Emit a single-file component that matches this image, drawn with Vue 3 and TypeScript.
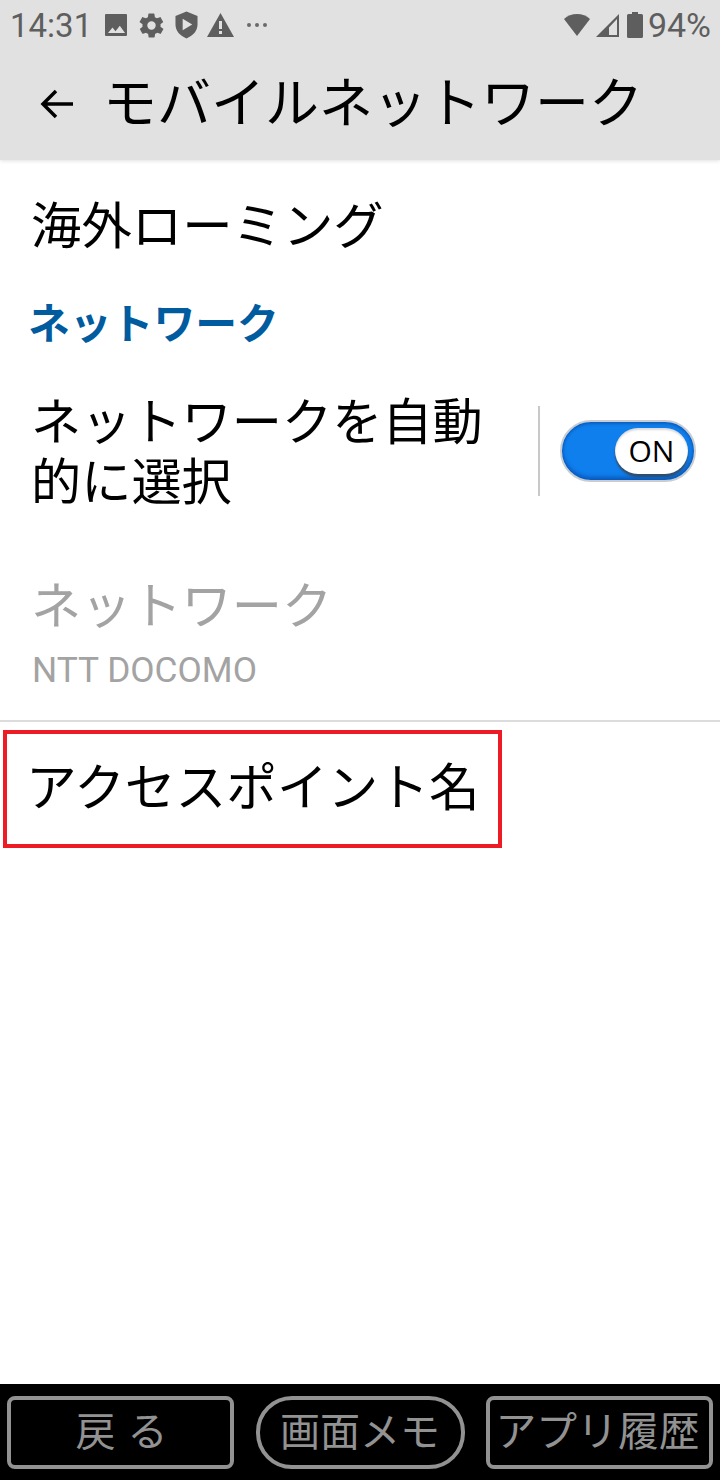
<template>
  <div class="screen">
    <header class="header">
      <div class="status-bar">
        <span class="clock">14:31</span>
        <div class="status-icons">
          <svg class="ic" width="24" height="24" viewBox="0 0 24 24"><path d="M2 1h20a1 1 0 0 1 1 1v20a1 1 0 0 1-1 1H2a1 1 0 0 1-1-1V2a1 1 0 0 1 1-1zM4 20h17l-5.200-7.200-4.300 5.400-3-3.600z" fill-rule="evenodd" /></svg>
          <svg class="ic" width="29" height="29" viewBox="0 0 24 24"><path d="M19.400 13c.1-.3.1-.7.1-1s0-.7-.1-1l2.100-1.600c.2-.2.2-.4.1-.6l-2-3.500c-.1-.2-.4-.3-.6-.2l-2.500 1c-.5-.4-1.100-.7-1.700-1l-.4-2.600c0-.3-.2-.5-.5-.5h-4c-.3 0-.5.2-.5.4l-.4 2.700c-.6.2-1.100.6-1.700 1l-2.500-1c-.2-.1-.5 0-.6.2l-2 3.500c-.1.2-.1.5.1.6L4.600 11c0 .3-.1.7-.1 1s0 .7.1 1l-2.100 1.600c-.2.2-.2.4-.1.6l2 3.500c.1.2.4.3.6.2l2.500-1c.5.4 1.100.7 1.700 1l.4 2.600c0 .3.2.5.5.5h4c.3 0 .5-.2.5-.4l.4-2.700c.6-.2 1.100-.6 1.700-1l2.500 1c.2.1.5 0 .6-.2l2-3.500c.1-.2.1-.5-.1-.6zM12 15.500a3.500 3.500 0 1 1 0-7 3.500 3.500 0 0 1 0 7z" fill-rule="evenodd" /></svg>
          <svg class="ic" width="23" height="28" viewBox="0 0 24 28"><path d="M12 0l11.500 4.500v9c0 6.500-4.800 12-11.500 14.500C5.300 25.500.5 20 .5 13.500v-9zM8 7.500v12l10-6z" fill-rule="evenodd" /></svg>
          <svg class="ic" width="27" height="24" viewBox="0 0 27 24"><path d="M13.500 0L27 24H0zM12 8v8h3V8zM12 18v3h3v-3z" fill-rule="evenodd" /></svg>
          <span class="more">
            <i></i><i></i><i></i>
          </span>
        </div>
        <div class="status-right">
          <svg class="ic" width="26" height="22" viewBox="0 0 26 22"><path d="M13 0c5 0 9.500 1.800 13 5L13 22 0 5c3.500-3.200 8-5 13-5z" /></svg>
          <svg class="ic signal" width="23" height="23" viewBox="0 0 23 23"><path d="M23 0v23H0zM21 5L13 13.500V21h8z" fill-rule="evenodd" /></svg>
          <svg class="ic" width="16" height="26" viewBox="0 0 16 26"><path d="M5 0h6v2h3.500a1.500 1.500 0 0 1 1.500 1.500v21a1.500 1.500 0 0 1-1.500 1.500h-13A1.500 1.500 0 0 1 0 24.500v-21A1.500 1.500 0 0 1 1.500 2H5z" /></svg>
          <span class="battery">94%</span>
        </div>
      </div>
      <div class="toolbar">
        <svg class="back" width="34" height="34" viewBox="0 0 34 34" fill="none" stroke="#000" stroke-width="3.500"><path d="M33 17H3M16 4L3 17l13 13" /></svg>
        <h1 class="title">モバイルネットワーク</h1>
      </div>
    </header>

    <main class="content">
      <div class="row roaming">海外ローミング</div>
      <h2 class="category">ネットワーク</h2>

      <div class="auto-row">
        <div class="auto-label">ネットワークを自動的に選択</div>
        <div class="divider"></div>
        <div class="toggle">
          <span class="knob">ON</span>
        </div>
      </div>

      <div class="disabled-row">
        <div class="disabled-title">ネットワーク</div>
        <div class="disabled-sub">NTT DOCOMO</div>
      </div>

      <div class="apn-wrap">
        <div class="apn-box">アクセスポイント名</div>
      </div>
    </main>

    <footer class="nav">
      <div v-for="btn in buttons" :key="btn.label" class="nav-btn" :class="btn.cls">{{ btn.label }}</div>
    </footer>
  </div>
</template>

<script setup lang="ts">
const buttons: Array<{ label: string; cls: string }> = [
  { label: '戻 る', cls: 'back-btn' },
  { label: '画面メモ', cls: 'memo-btn' },
  { label: 'アプリ履歴', cls: 'apps-btn' },
]
</script>

<style>
body {
  margin: 0;
}
</style>

<style scoped>
.screen {
  width: 720px;
  height: 1480px;
  display: flex;
  flex-direction: column;
  background: #fff;
  overflow: hidden;
  font-family: Roboto, "Noto Sans CJK JP", sans-serif;
  color: #000;
}

.header {
  height: 160px;
  flex: none;
  background: #e1e1e1;
  box-shadow: 0 1px 4px rgba(0, 0, 0, 0.12);
  position: relative;
}

.status-bar {
  height: 48px;
  display: flex;
  align-items: center;
  padding: 2px 9px 0 10px;
  box-sizing: border-box;
  color: #5e5e5e;
}

.clock {
  font-size: 33px;
}

.status-icons {
  display: flex;
  align-items: center;
  gap: 9px;
  margin-left: 12px;
}

.status-right {
  display: flex;
  align-items: center;
  margin-left: auto;
  gap: 8px;
}

.signal {
  margin-left: -2px;
}

.ic {
  fill: #5e5e5e;
  display: block;
}

.more {
  display: flex;
  gap: 4px;
  margin-left: 4px;
}

.more i {
  width: 4px;
  height: 4px;
  border-radius: 50%;
  background: #6a6a6a;
}

.battery {
  font-size: 34px;
  margin-left: -3px;
}

.toolbar {
  height: 112px;
  display: flex;
  align-items: center;
  padding: 2px 0 0 40px;
  box-sizing: border-box;
  gap: 29px;
}

.back {
  flex: none;
  margin-top: -2px;
}

.title {
  margin: 0;
  font-size: 54px;
  font-weight: 400;
  line-height: 72px;
  white-space: nowrap;
}

.content {
  flex: 1;
}

.row {
  font-size: 50.400px;
  line-height: 70px;
}

.roaming {
  padding: 32px 0 0 31px;
}

.category {
  margin: 0;
  padding: 35px 0 0 28px;
  font-size: 41.800px;
  line-height: 56px;
  font-weight: 700;
  color: #005b9f;
}

.auto-row {
  display: flex;
  align-items: center;
  padding: 38px 24px 0 31px;
}

.auto-label {
  width: 460px;
  padding-top: 2px;
  margin-bottom: -2px;
  font-size: 50.200px;
  line-height: 60px;
}

.divider {
  width: 2px;
  height: 90px;
  margin-left: 47px;
  background: #c8c8c8;
}

.toggle {
  width: 136px;
  height: 62px;
  margin-left: 20px;
  box-sizing: border-box;
  padding: 6px 6px 0 0;
  display: flex;
  justify-content: flex-end;
  align-items: flex-start;
  border-radius: 31px;
  background: #0f7fee;
  border: 2px solid #c9cdd2;
  box-shadow: inset 0 -3px 4px rgba(0, 40, 120, 0.45), inset 0 2px 3px rgba(0, 30, 90, 0.3);
}

.knob {
  width: 73px;
  height: 46px;
  border-radius: 23px;
  background: #fff;
  box-shadow: 0 3px 2px rgba(60, 60, 60, 0.7), inset 0 2px 2px rgba(0, 0, 0, 0.15);
  font-family: "Open Sans", sans-serif;
  font-size: 30px;
  line-height: 46px;
  text-align: center;
}

.disabled-row {
  padding: 61px 0 0 31px;
  color: #a3a3a3;
  border-bottom: 2px solid #dcdcdc;
  height: 211px;
  box-sizing: border-box;
}

.disabled-title {
  font-size: 50.200px;
  line-height: 70px;
}

.disabled-sub {
  font-size: 35.300px;
  line-height: 48px;
  margin: 4px 0 0 1px;
}

.apn-wrap {
  padding: 8px 0 0 3px;
}

.apn-box {
  width: 499px;
  height: 118px;
  box-sizing: border-box;
  border: 4px solid #ed1c24;
  padding-left: 19px;
  font-size: 50.700px;
  line-height: 110px;
  white-space: nowrap;
}

.nav {
  height: 96px;
  flex: none;
  background: #000;
  display: flex;
  align-items: center;
  padding: 0 7px;
  box-sizing: border-box;
  justify-content: space-between;
}

.nav-btn {
  height: 73px;
  box-sizing: border-box;
  border: 4px solid #929292;
  color: #929292;
  font-size: 40px;
  line-height: 65px;
  text-align: center;
  white-space: nowrap;
  border-radius: 8px;
}

.back-btn {
  width: 227px;
  word-spacing: 2px;
  padding-left: 2px;
}

.memo-btn {
  width: 209px;
  border-radius: 36px;
}

.apps-btn {
  width: 227px;
  font-size: 40.800px;
  padding-right: 4px;
}
</style>
